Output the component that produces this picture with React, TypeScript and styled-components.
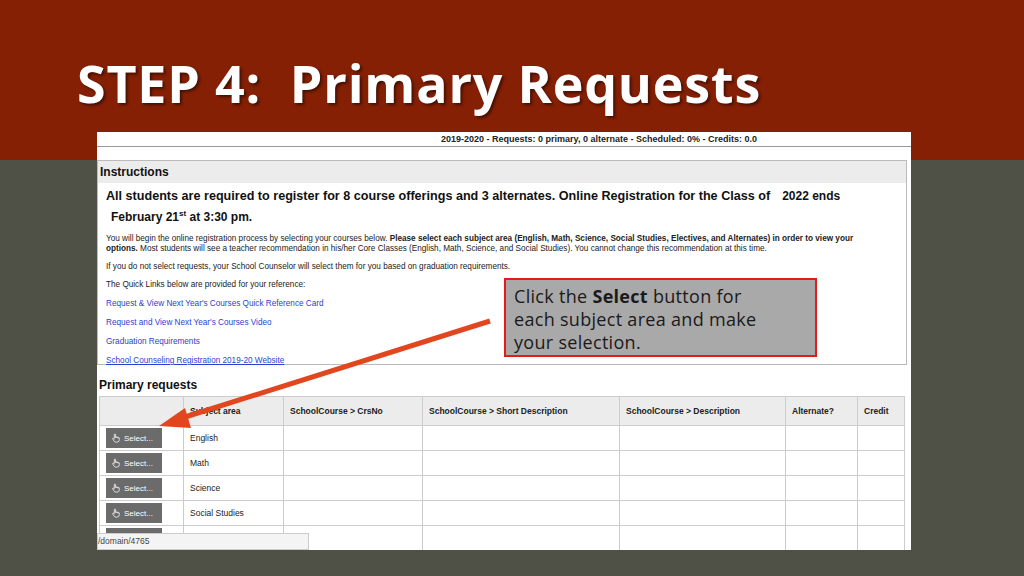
import React from "react";
import styled, { createGlobalStyle } from "styled-components";

const Global = createGlobalStyle`
  html, body { margin: 0; padding: 0; }
  body { width: 1024px; height: 576px; overflow: hidden; }
`;

const Slide = styled.div`
  position: relative;
  width: 1024px; height: 576px;
  background: linear-gradient(#862005 0 160px, #4f5046 160px);
  font-family: "Liberation Sans", Arial, sans-serif;
  display: flex; flex-direction: column;
`;
const Title = styled.h1`
  margin: 0; padding: 53px 0 0 77px; height: 132px; box-sizing: border-box;
  color: #fff; font-family: "Open Sans", sans-serif; font-weight: 700; font-size: 52px;
  line-height: 60px; letter-spacing: 0.8px; white-space: pre;
  text-shadow: 2px 2px 3px rgba(0,0,0,0.5);
`;
const Shot = styled.div`
  margin-left: 97px; width: 814px; height: 418px; background: #fff;
  position: relative; overflow: hidden; display: flex; flex-direction: column;
`;
const TopBar = styled.div`
  height: 18px; border-bottom: 1px solid #999; text-align: center;
  font-size: 9px; font-weight: 700; color: #222; line-height: 14px; padding-left: 190px;
`;
const Inst = styled.div`
  margin: 13px 4px 0 0; border: 1px solid #bbb; height: 205px; box-sizing: border-box;
`;
const InstHead = styled.div`
  background: #ececec; height: 22px; font-size: 12px; font-weight: 700; color: #111;
  line-height: 22px; padding-left: 2px;
`;
const InstBody = styled.div`padding: 4px 0 0 8px; color: #222;`;
const Big = styled.div`
  font-size: 12.6px; font-weight: 700; color: #111; line-height: 18px; white-space: nowrap;
  display: flex;
`;
const Ends = styled.span`margin-left: 12px; font-size: 12px;`;
const Feb = styled.div`font-size: 12px; font-weight: 700; color: #111; line-height: 18px; padding-left: 5px;`;
const P = styled.div`font-size: 8.2px; line-height: 10px; margin-top: 8px; white-space: nowrap;`;
const Link = styled.div<{ u?: boolean }>`
  font-size: 8.2px; color: #2d3fd0; margin-top: 9px; line-height: 10px;
  text-decoration: ${p => (p.u ? "underline" : "none")};
`;
const Section = styled.div`font-size: 12px; font-weight: 700; color: #111; margin: 13px 0 0 2px; line-height: 15px;`;
const Table = styled.table`
  margin: 3px 0 0 2px; border-collapse: collapse; width: 806px; font-size: 8.5px; color: #222;
  td, th { border: 1px solid #ccc; padding: 0 6px; text-align: left; }
  th { background: #ececec; height: 28px; font-weight: 700; }
  td { height: 24px; }
`;
const SelBtn = styled.div`
  width: 56px; height: 20px; background: #6b6b6b; color: #fff; font-size: 8px;
  display: flex; align-items: center; gap: 3px; padding-left: 5px; box-sizing: border-box;
`;
const Status = styled.div`
  position: absolute; left: 0; bottom: 0; width: 210px; height: 15px; background: #f4f4f4;
  border: 1px solid #ccc; font-size: 8.5px; color: #444; line-height: 14px;
`;
const Callout = styled.div`
  position: absolute; left: 407px; top: 146px; width: 313px; height: 79px; box-sizing: border-box;
  background: #a9a9a9; border: 2px solid #e31b1b; padding: 5px 40px 5px 8px;
  font-family: "Open Sans", sans-serif; font-size: 18px; line-height: 23px; color: #1a1a1a;
  letter-spacing: 0.3px;
  b { font-weight: 700; }
`;
const Arrow = styled.svg`position: absolute; left: 0; top: 0; pointer-events: none;`;

const Hand = () => (
  <svg width="10" height="10" viewBox="0 0 24 24" fill="none" stroke="#fff" strokeWidth="1.8">
    <path d="M8 13V4a1.5 1.5 0 0 1 3 0v7M11 10.5a1.5 1.5 0 0 1 3 0V12M14 11.5a1.5 1.5 0 0 1 3 0V13M17 12.5a1.5 1.5 0 0 1 3 0V16a6 6 0 0 1-6 6h-2a6 6 0 0 1-5-3l-3-5a1.5 1.5 0 0 1 2.5-1.5L8 15" />
  </svg>
);

const rows = ["English", "Math", "Science", "Social Studies", ""];

export default function App() {
  return (
    <Slide>
      <Global />
      <Title>STEP 4:  Primary Requests</Title>
      <Shot>
        <TopBar>2019-2020 - Requests: 0 primary, 0 alternate - Scheduled: 0% - Credits: 0.0</TopBar>
        <Inst>
          <InstHead>Instructions</InstHead>
          <InstBody>
            <Big>All students are required to register for 8 course offerings and 3 alternates. Online Registration for the Class of<Ends>2022 ends</Ends></Big>
            <Feb>February 21<sup style={{ fontSize: 8 }}>st</sup> at 3:30 pm.</Feb>
            <P>
              You will begin the online registration process by selecting your courses below. <b>Please select each subject area (English, Math, Science, Social Studies, Electives, and Alternates) in order to view your</b>
              <br />
              <b>options.</b> Most students will see a teacher recommendation in his/her Core Classes (English, Math, Science, and Social Studies). You cannot change this recommendation at this time.
            </P>
            <P>If you do not select requests, your School Counselor will select them for you based on graduation requirements.</P>
            <P>The Quick Links below are provided for your reference:</P>
            <Link>Request &amp; View Next Year's Courses Quick Reference Card</Link>
            <Link>Request and View Next Year's Courses Video</Link>
            <Link>Graduation Requirements</Link>
            <Link u>School Counseling Registration 2019-20 Website</Link>
          </InstBody>
        </Inst>
        <Section>Primary requests</Section>
        <Table>
          <thead>
            <tr>
              <th style={{ width: 71 }}></th>
              <th style={{ width: 87 }}>Subject area</th>
              <th style={{ width: 126 }}>SchoolCourse &gt; CrsNo</th>
              <th style={{ width: 184 }}>SchoolCourse &gt; Short Description</th>
              <th style={{ width: 153 }}>SchoolCourse &gt; Description</th>
              <th style={{ width: 59 }}>Alternate?</th>
              <th>Credit</th>
            </tr>
          </thead>
          <tbody>
            {rows.map((r, i) => (
              <tr key={i}>
                <td><SelBtn><Hand />Select...</SelBtn></td>
                <td>{r}</td><td></td><td></td><td></td><td></td><td></td>
              </tr>
            ))}
          </tbody>
        </Table>
        <Status>/domain/4765</Status>
        <Callout>Click the <b>Select</b> button for each subject area and make your selection.</Callout>
        <Arrow width="814" height="418" viewBox="0 0 814 418">
          <line x1="393" y1="189" x2="85" y2="286" stroke="#e2461f" strokeWidth="5" />
          <polygon points="62,294 88,276 94,296" fill="#e2461f" />
        </Arrow>
      </Shot>
    </Slide>
  );
}
